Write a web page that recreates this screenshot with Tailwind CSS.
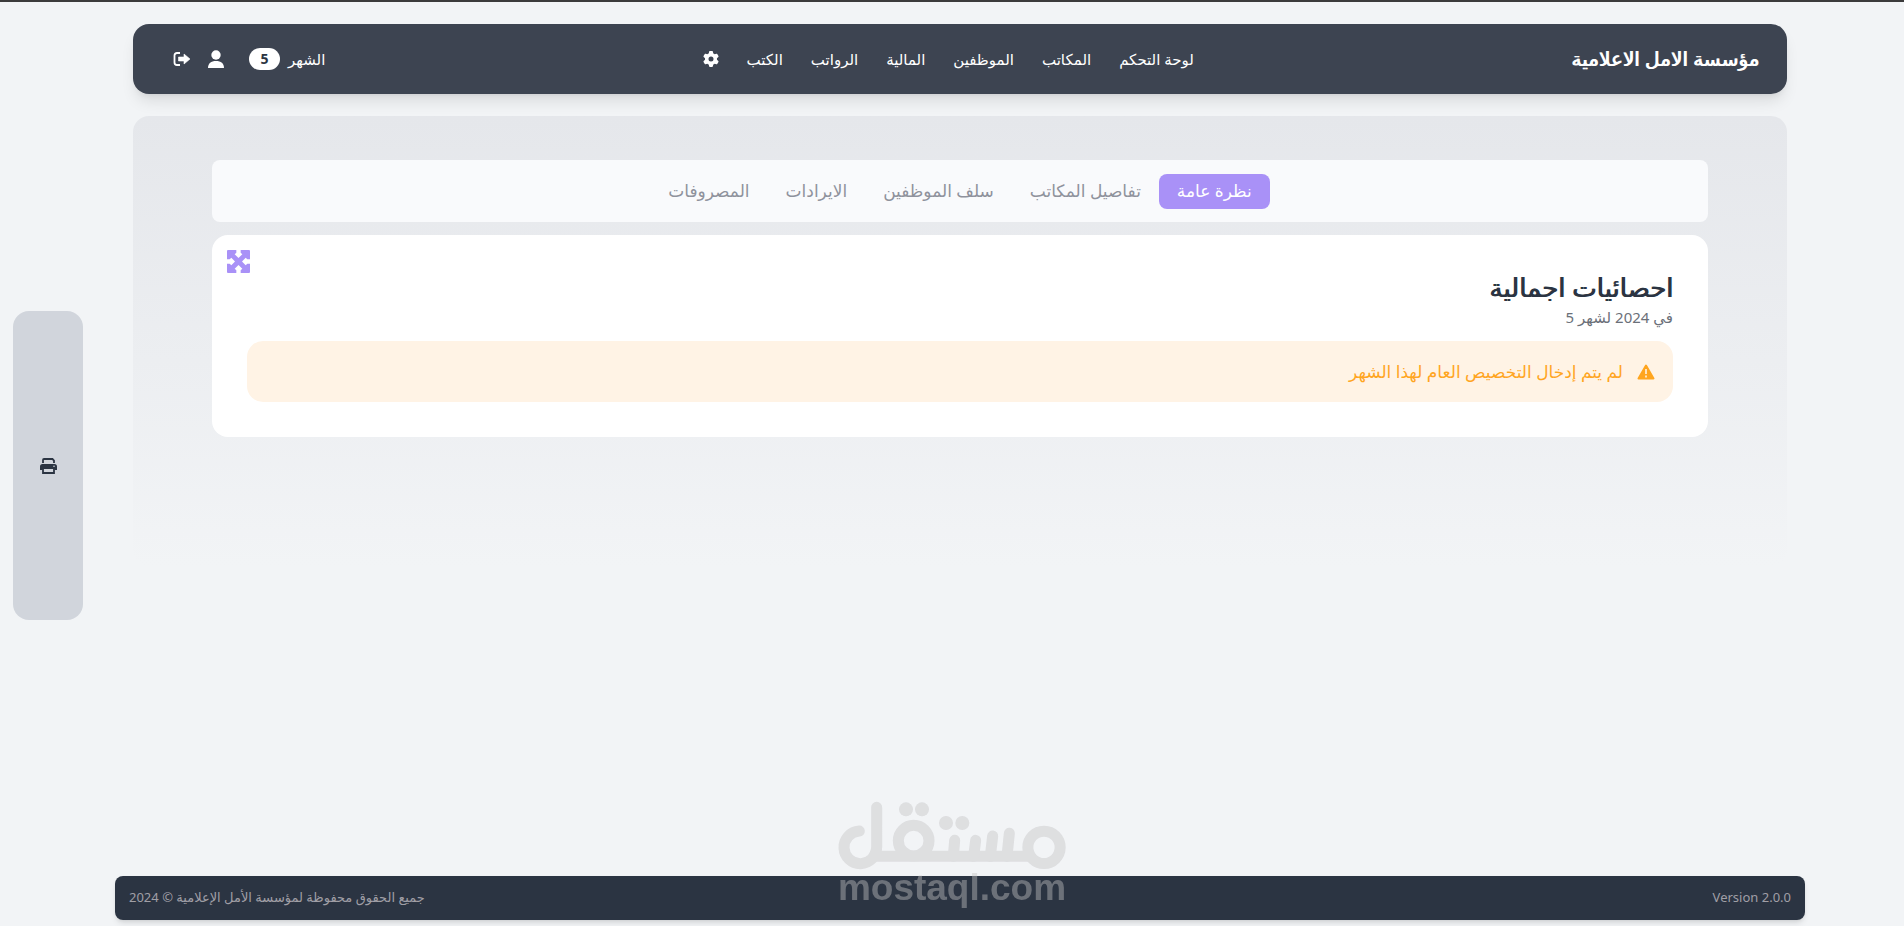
<!DOCTYPE html>
<html lang="ar" dir="rtl">
<head>
<meta charset="UTF-8" />
<meta name="viewport" content="width=device-width, initial-scale=1.0" />
<title>مؤسسة الامل الاعلامية</title>
<script src="https://cdn.jsdelivr.net/npm/@tailwindcss/browser@4"></script>
</head>
<body class="bg-[#f2f4f6] text-[#2b3442] font-['Noto_Sans','DejaVu_Sans',sans-serif]">
<div class="relative min-h-screen flex flex-col border-t-2 border-[#3b3b3b] pt-[22px] pb-1.5 pr-[99px] pl-[115px]">

    <header class="mx-[18px] h-[70px] pr-7 pl-10 rounded-2xl bg-[#3d4451] text-white shadow-lg flex items-center justify-between">
    <a href="#" class="text-xl font-medium [text-shadow:1px_0_currentColor]">مؤسسة الامل الاعلامية</a>
    <nav class="flex items-center gap-7 text-[15px] font-medium">
        <a href="#">لوحة التحكم</a>
        <a href="#">المكاتب</a>
        <a href="#">الموظفين</a>
        <a href="#">المالية</a>
        <a href="#">الرواتب</a>
        <a href="#">الكتب</a>
        <a href="#" aria-label="الاعدادات">
        <svg class="size-4" viewBox="0 0 512 512" fill="currentColor"><path d="M495.900 166.600c3.200 8.700.5 18.400-6.400 24.600l-43.300 39.400c1.100 8.300 1.700 16.800 1.700 25.400s-.6 17.100-1.700 25.400l43.300 39.400c6.900 6.200 9.600 15.900 6.400 24.600-4.400 11.900-9.700 23.300-15.800 34.300l-4.700 8.100c-6.600 11-14 21.400-22.100 31.200-5.900 7.200-15.700 9.600-24.500 6.800l-55.700-17.700c-13.400 10.300-28.200 18.900-44 25.400l-12.500 57.100c-2 9.100-9 16.300-18.200 17.800-13.800 2.300-28 3.500-42.500 3.500s-28.700-1.200-42.500-3.500c-9.200-1.500-16.200-8.700-18.200-17.800l-12.500-57.100c-15.800-6.500-30.600-15.100-44-25.400l-55.600 17.800c-8.800 2.800-18.600.3-24.500-6.800-8.100-9.800-15.500-20.200-22.100-31.200l-4.700-8.100c-6.100-11-11.400-22.400-15.800-34.300-3.200-8.700-.5-18.400 6.400-24.600l43.300-39.400C64.600 273.100 64 264.600 64 256s.6-17.100 1.700-25.400l-43.300-39.400c-6.900-6.200-9.600-15.900-6.400-24.600 4.400-11.900 9.700-23.300 15.800-34.300l4.700-8.100c6.600-11 14-21.400 22.100-31.200 5.900-7.200 15.700-9.600 24.500-6.800l55.700 17.700c13.400-10.300 28.200-18.900 44-25.400l12.500-57.100c2-9.100 9-16.300 18.200-17.800C227.300 1.200 241.500 0 256 0s28.700 1.200 42.500 3.500c9.200 1.500 16.200 8.700 18.200 17.800l12.500 57.100c15.800 6.500 30.600 15.100 44 25.400l55.700-17.700c8.800-2.800 18.600-.3 24.500 6.800 8.100 9.800 15.500 20.200 22.100 31.200l4.700 8.100c6.100 11 11.400 22.400 15.800 34.300zM256 336a80 80 0 1 0 0-160 80 80 0 1 0 0 160z"/></svg>
        </a>
    </nav>
    <div class="flex items-center">
        <span class="text-[15px] font-medium">الشهر</span>
        <span class="ms-2 w-[31px] h-[22px] rounded-full bg-white text-[#2b3442] text-sm font-bold flex items-center justify-center">5</span>
        <a href="#" class="ms-6" aria-label="الحساب">
        <svg class="w-[18px] h-5" viewBox="0 0 18 20" fill="currentColor"><circle cx="9" cy="6" r="4.700"/><path d="M1 19c0-4.500 3-7 8-7s8 2.500 8 7z"/></svg>
        </a>
        <a href="#" class="ms-4" aria-label="خروج">
        <svg class="w-[18px] h-4" viewBox="0 0 18 16" fill="none"><path d="M7 2H4Q1.500 2 1.500 4.500v7Q1.500 14 4 14H7" stroke="currentColor" stroke-width="1.800"/><path d="M5.500 6H11V3L17 8 11 13V10H5.500z" fill="currentColor" stroke="currentColor" stroke-width=".6" stroke-linejoin="round"/></svg>
        </a>
    </div>
    </header>

    <main class="mx-[18px] mt-[22px] min-h-[450px] rounded-2xl bg-linear-to-b from-[#e5e7eb] to-[#f2f4f6] px-[79px] pt-11">
    <nav class="h-[62px] rounded-lg bg-[#f9fafc] flex items-center justify-center text-[17px] font-medium text-[#8f929c]">
        <a href="#" class="h-[35px] px-[18px] rounded-lg bg-[#a991f7] text-white flex items-center">نظرة عامة</a>
        <a href="#" class="px-[18px]">تفاصيل المكاتب</a>
        <a href="#" class="px-[18px]">سلف الموظفين</a>
        <a href="#" class="px-[18px]">الايرادات</a>
        <a href="#" class="px-[18px]">المصروفات</a>
    </nav>

    <section class="relative mt-[13px] h-[202px] rounded-2xl bg-white px-[35px] pt-9">
        <button class="absolute top-[15px] left-[15px] text-[#a991f7]" aria-label="تكبير">
        <svg class="size-[23px]" viewBox="0 0 69 69" fill="currentColor" fill-rule="evenodd"><path d="M3 0H66Q69 0 69 3V66Q69 69 66 69H3Q0 69 0 66V3Q0 0 3 0ZM28 0V8L23 13L34.500 24L46 13L41 8V0ZM28 69V61L23 56L34.500 45L46 56L41 61V69ZM0 28H8L13 23L24 34.500L13 46L8 41H0ZM69 28H61L56 23L45 34.500L56 46L61 41H69Z"/></svg>
        </button>
        <h2 class="text-[26px] leading-8 font-medium [text-shadow:1px_0_currentColor]">احصائيات اجمالية</h2>
        <p class="text-[15px] leading-7 text-[#6b7079]">في 2024 لشهر 5</p>
        <div role="alert" class="mt-2.5 h-[61px] px-[18px] rounded-2xl bg-[#fff3e5] text-[#ffa51f] flex items-center gap-3.5">
        <svg class="w-[18px] h-4" viewBox="0 0 18 16"><path d="M9 1.500L16.500 14.500H1.500z" fill="currentColor" stroke="currentColor" stroke-width="2" stroke-linejoin="round"/><path d="M9 5v5M9 11.500v2" stroke="#fff3e5" stroke-width="1.600"/></svg>
        <span class="text-[17px]">لم يتم إدخال التخصيص العام لهذا الشهر</span>
        </div>
    </section>
    </main>

    <footer class="mt-auto h-11 px-3.5 rounded-lg bg-[#2b3442] text-[#a09fa6] text-[13px] shadow-md flex items-center justify-between">
    <span dir="ltr">Version 2.0.0</span>
    <span>جميع الحقوق محفوظة لمؤسسة الأمل الإعلامية © 2024</span>
    </footer>
</div>

<!-- side tools -->
<aside class="fixed left-[13px] top-[311px] w-[70px] h-[309px] rounded-2xl bg-[#d1d5dc] flex items-center justify-center">
    <button aria-label="طباعة">
    <svg class="w-[17px] h-4" viewBox="0 0 17 16" fill="none"><path d="M3 5V2Q3 1 4 1h8.500l1.500 1.500V5M3 11v4h11v-4" stroke="currentColor" stroke-width="1.800"/><path d="M2.500 6h12Q17 6 17 8.500V12H14.500V11H2.500v1H0V8.500Q0 6 2.500 6z" fill="currentColor"/><circle cx="14" cy="8.300" r=".8" fill="#d1d5dc"/></svg>
    </button>
</aside>

<!-- watermark -->
<div dir="ltr" class="fixed bottom-0 left-1/2 -translate-x-1/2 w-[230px] h-[126px] opacity-[0.43] text-[#c3c2c4] pointer-events-none flex flex-col items-center">
    <svg class="w-[230px] h-[70px] shrink-0" viewBox="51 60 690 210" fill="none" stroke="currentColor" stroke-width="33" stroke-linecap="round">
    <circle cx="672" cy="202" r="48.500"/>
    <circle cx="281" cy="182" r="46"/>
    <path d="M150 229H640" stroke-linecap="butt"/>
    <path d="M170 82V202A49 49 0 1 1 118 153"/>
    <path d="M568 160L561 229M518 168L511 229M467 181L461 229M404 181L400 229"/>
    <g fill="currentColor" stroke="none"><circle cx="258" cy="88" r="21"/><circle cx="306" cy="88" r="21"/><circle cx="378" cy="129" r="21"/><circle cx="427" cy="129" r="21"/><path d="M238 214l-10-8v14h106v-14l-10 8z"/></g>
    </svg>
    <span class="font-['Liberation_Sans',sans-serif] font-bold text-[37px] leading-9">mostaql.com</span>
</div>
</body>
</html>
